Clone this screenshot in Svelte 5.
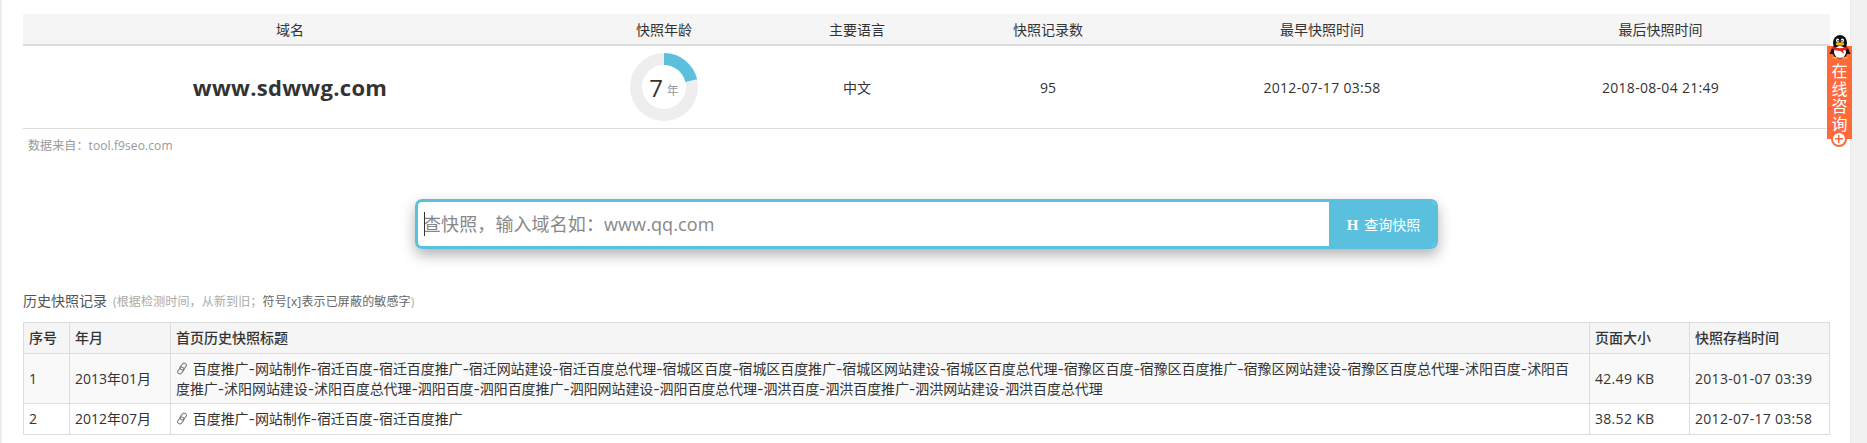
<script>
    const summaryCols = ['域名', '快照年龄', '主要语言', '快照记录数', '最早快照时间', '最后快照时间'];

    const towns = ['宿迁', '宿城区', '宿豫区', '沭阳', '泗阳', '泗洪'];
    const longTitle = '百度推广-网站制作-' + towns
        .map((t) => `${t}百度-${t}百度推广-${t}网站建设-${t}百度总代理`)
        .join('-');

    const records = [
        { id: 1, month: '2013年01月', title: longTitle, size: '42.49 KB', time: '2013-01-07 03:39' },
        { id: 2, month: '2012年07月', title: '百度推广-网站制作-宿迁百度-宿迁百度推广', size: '38.52 KB', time: '2012-07-17 03:58' },
    ];
</script>

<div class="page">
    <main class="content">
        <table class="summary">
            <colgroup>
                <col style="width: 534px" />
                <col style="width: 214px" />
                <col style="width: 172px" />
                <col style="width: 210px" />
                <col style="width: 338px" />
                <col style="width: 339px" />
            </colgroup>
            <thead>
                <tr>
                    {#each summaryCols as col}
                        <th>{col}</th>
                    {/each}
                </tr>
            </thead>
            <tbody>
                <tr>
                    <td class="domain">www.sdwwg.com</td>
                    <td>
                        <div class="donut">
                            <svg width="68" height="68" viewBox="0 0 68 68">
                                <circle cx="34" cy="34" r="28" fill="none" stroke="#eeeeee" stroke-width="12" />
                                <circle cx="34" cy="34" r="28" fill="none" stroke="#5bc0de" stroke-width="12"
                                    stroke-dasharray="37.5 138.5" transform="rotate(-90 34 34)" />
                            </svg>
                            <span class="donut-label"><b>7</b><i>年</i></span>
                        </div>
                    </td>
                    <td>中文</td>
                    <td>95</td>
                    <td class="stamp">2012-07-17 03:58</td>
                    <td class="stamp">2018-08-04 21:49</td>
                </tr>
            </tbody>
        </table>
        <p class="source">数据来自：tool.f9seo.com</p>

        <form class="search" onsubmit={(e) => e.preventDefault()}>
            <div class="search-field">
                <span class="caret"></span>
                <input type="text" placeholder="查快照，输入域名如：www.qq.com" />
            </div>
            <button type="submit"><span class="h-icon">H</span>查询快照</button>
        </form>

        <h2 class="history-title">历史快照记录<small>(根据检测时间，从新到旧；<em>符号[x]表示已屏蔽的敏感字</em>)</small></h2>

        <table class="history">
            <colgroup>
                <col style="width: 46px" />
                <col style="width: 101px" />
                <col />
                <col style="width: 100px" />
                <col style="width: 140px" />
            </colgroup>
            <thead>
                <tr>
                    <th>序号</th>
                    <th>年月</th>
                    <th>首页历史快照标题</th>
                    <th>页面大小</th>
                    <th>快照存档时间</th>
                </tr>
            </thead>
            <tbody>
                {#each records as rec}
                    <tr>
                        <td>{rec.id}</td>
                        <td>{rec.month}</td>
                        <td class="title">
                            <svg class="link-icon" width="12" height="13" viewBox="0 0 12 13" fill="none" stroke="#777" stroke-width="1">
                                <rect x="5" y="0.8" width="4.4" height="7.4" rx="2.2" transform="rotate(38 7.2 4.5)" />
                                <rect x="2.6" y="4.8" width="4.4" height="7.4" rx="2.2" transform="rotate(38 4.8 8.5)" />
                            </svg>
                            {rec.title}
                        </td>
                        <td class="stamp">{rec.size}</td>
                        <td class="stamp">{rec.time}</td>
                    </tr>
                {/each}
            </tbody>
        </table>
    </main>
    <div class="scrollbar"></div>

    <aside class="consult">
        <svg class="penguin" width="22" height="24" viewBox="0 0 22 24">
            <ellipse cx="11" cy="8" rx="7" ry="8" fill="#111" />
            <ellipse cx="11" cy="16" rx="8" ry="7.5" fill="#111" />
            <path d="M3 13 L0.5 19 L3.5 19 L5 15 Z" fill="#111" />
            <path d="M19 13 L21.5 19 L18.5 19 L17 15 Z" fill="#111" />
            <ellipse cx="11" cy="17" rx="6" ry="6" fill="#fff" />
            <ellipse cx="8.6" cy="5.6" rx="1.6" ry="2.1" fill="#fff" />
            <ellipse cx="13.4" cy="5.6" rx="1.6" ry="2.1" fill="#fff" />
            <circle cx="9" cy="5.8" r="0.8" fill="#111" />
            <circle cx="13" cy="5.8" r="0.8" fill="#111" />
            <ellipse cx="11" cy="9" rx="4.2" ry="1.7" fill="#f6b21b" />
            <path d="M3.5 11.5 Q11 15 18.5 11.5 L18.5 14 Q15 15.5 14 15.5 L15 19 L11.5 16 Q7 16 3.5 14 Z" fill="#e2231a" />
            <path d="M3.5 22 h5 v1.6 h-5 Z M13.5 22 h5 v1.6 h-5 Z" fill="#f6b21b" />
        </svg>
        <span class="consult-text">在线咨询</span>
        <span class="consult-plus"></span>
    </aside>
</div>

<style>
    :global(body) {
        margin: 0;
        background: #fff;
        overflow: hidden;
    }

    .page {
        display: flex;
        position: relative;
        height: 443px;
        overflow: hidden;
        font-family: "Open Sans", "Noto Sans CJK SC", sans-serif;
        font-size: 14px;
        color: #333;
        border-left: 2px solid #ececec;
        box-sizing: border-box;
    }

    .content {
        flex: 1;
        min-width: 0;
        padding: 14px 20px 0 21px;
    }

    .scrollbar {
        width: 17px;
        flex-shrink: 0;
        background: #f1f1f1;
        border-left: 1px solid #eaeaea;
        box-sizing: border-box;
    }

    table {
        border-collapse: collapse;
        table-layout: fixed;
        width: 1807px;
    }

    /* top summary */
    .summary th {
        height: 30px;
        padding: 0;
        background: #f5f5f5;
        border-bottom: 2px solid #ddd;
        font-weight: 400;
        text-align: center;
    }

    .summary td {
        height: 82px;
        padding: 0;
        text-align: center;
        border-bottom: 1px solid #ddd;
    }

    .summary .domain {
        font-size: 22px;
        font-weight: 700;
        letter-spacing: 0.3px;
    }

    .stamp {
        letter-spacing: 0.3px;
    }

    .donut {
        position: relative;
        width: 68px;
        height: 68px;
        margin: 0 auto;
    }

    .donut svg {
        display: block;
    }

    .donut-label {
        position: absolute;
        inset: 0;
        display: flex;
        align-items: center;
        justify-content: center;
        gap: 4px;
    }

    .donut-label b {
        font-size: 24px;
        font-weight: 400;
    }

    .donut-label i {
        margin-top: 6px;
        font-size: 12px;
        font-style: normal;
        color: #999;
    }

    .source {
        margin: 8px 0 0 5px;
        font-size: 12px;
        line-height: 18px;
        letter-spacing: 0.1px;
        color: #999;
    }

    /* search */
    .search {
        display: flex;
        width: 1023px;
        height: 50px;
        margin: 44px 0 0 392px;
        border: 3px solid #5bc0de;
        border-radius: 7px;
        box-sizing: border-box;
        box-shadow: 0 6px 14px rgba(0, 0, 0, 0.3);
        overflow: hidden;
    }

    .search-field {
        position: relative;
        flex: 1;
    }

    .search-field input {
        width: 100%;
        height: 100%;
        padding: 0 5px;
        border: 0;
        outline: 0;
        box-sizing: border-box;
        font: inherit;
        font-size: 18px;
        letter-spacing: 0.1px;
        background: transparent;
    }

    .search-field input::placeholder {
        color: #888;
    }

    .caret {
        position: absolute;
        left: 6px;
        top: 10px;
        width: 1px;
        height: 24px;
        background: #333;
    }

    .search button {
        width: 106px;
        border: 0;
        padding: 0 0 0 3px;
        background: #5bc0de;
        color: #fff;
        font: inherit;
        font-size: 14px;
    }

    .h-icon {
        margin-right: 6px;
        font-family: "Liberation Serif", serif;
        font-size: 15px;
        font-weight: 700;
    }

    /* history */
    .history-title {
        margin: 42px 0 0;
        font-size: 14px;
        font-weight: 400;
        line-height: 20px;
        color: #555;
    }

    .history-title small {
        margin-left: 6px;
        font-size: 12px;
        letter-spacing: 0.15px;
        color: #aaa;
    }

    .history-title em {
        font-style: normal;
        color: #666;
    }

    .history {
        margin-top: 10px;
    }

    .history th,
    .history td {
        padding: 5px 5px 4px;
        border: 1px solid #ddd;
        line-height: 20px;
        text-align: left;
    }

    .history td.title {
        padding-right: 10px;
        font-family: Inter, "Noto Sans CJK SC", sans-serif;
        letter-spacing: -0.08px;
    }

    .history th {
        height: 20px;
        padding-bottom: 5px;
        background: #f5f5f5;
        font-weight: 500;
    }

    .history tbody tr:nth-child(odd) td {
        background: #f9f9f9;
    }

    .history tbody tr:last-child td {
        padding-bottom: 5px;
    }

    .link-icon {
        vertical-align: -1px;
        margin-right: 1px;
    }

    /* floating widget, sits on top of the page edge */
    .consult {
        position: absolute;
        right: 15px;
        top: 46px;
        width: 25px;
        height: 93px;
        background: #ff6a3c;
        color: #fff;
        text-align: center;
    }

    .penguin {
        position: absolute;
        left: 2px;
        top: -11px;
    }

    .consult-text {
        display: block;
        width: 16px;
        margin: 17px auto 0;
        font-size: 16px;
        line-height: 17.5px;
    }

    .consult-plus {
        position: absolute;
        left: 4px;
        bottom: -8px;
        width: 12px;
        height: 12px;
        border: 2px solid #ff6a3c;
        border-radius: 50%;
        background:
            linear-gradient(#ff6a3c, #ff6a3c) center / 8px 1.5px no-repeat,
            linear-gradient(#ff6a3c, #ff6a3c) center / 1.5px 8px no-repeat,
            #fff;
    }
</style>
